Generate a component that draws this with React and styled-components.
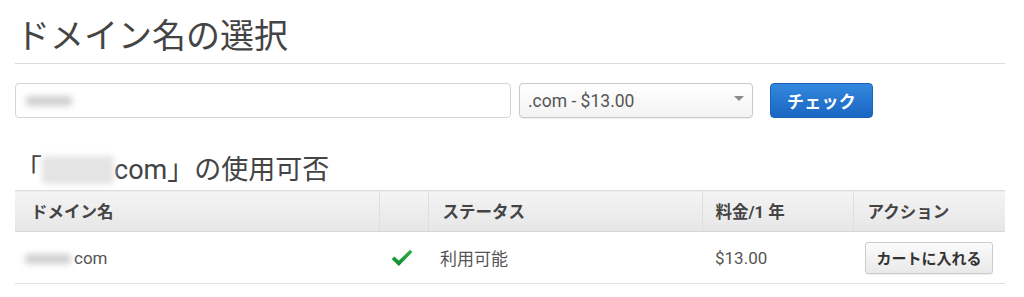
import React from "react";
import styled, { createGlobalStyle } from "styled-components";

const Global = createGlobalStyle`
  html, body {
    margin: 0;
    padding: 0;
    background: #fff;
  }
  body {
    font-family: Roboto, "Noto Sans CJK JP", "DejaVu Sans", sans-serif;
    color: #444;
  }
`;

const Page = styled.div`
  width: 990px;
  padding-left: 15px;
`;

const Title = styled.h1`
  margin: 0;
  padding: 14px 0 5px 1px;
  font-size: 34px;
  line-height: 44px;
  font-weight: 400;
  color: #444;
  border-bottom: 1px solid #dcdcdc;
`;

const Form = styled.div`
  display: flex;
  align-items: center;
  margin-top: 19px;
`;

const TextField = styled.div`
  box-sizing: border-box;
  width: 496px;
  height: 35px;
  border: 1px solid #d4d4d4;
  border-radius: 4px;
  background: #fff;
  display: flex;
  align-items: center;
  padding-left: 10px;
`;

const Blur = styled.span`
  display: inline-block;
  width: ${(p) => p.w}px;
  height: ${(p) => p.h}px;
  margin-right: ${(p) => p.mr || 0}px;
  background: ${(p) => p.c || "#cfcfcf"};
  filter: blur(3px);
  border-radius: 4px;
  vertical-align: middle;
`;

const Select = styled.div`
  box-sizing: border-box;
  width: 234px;
  height: 35px;
  margin-left: 8px;
  border: 1px solid #c8c8c8;
  border-radius: 4px;
  background: linear-gradient(#ffffff, #f3f3f3);
  box-shadow: 0 1px 1px rgba(0, 0, 0, 0.06);
  display: flex;
  align-items: center;
  justify-content: space-between;
  padding: 0 8px 0 8px;
  font-size: 17.5px;
  color: #555;
`;

const Caret = styled.span`
  width: 0;
  height: 0;
  border-left: 5px solid transparent;
  border-right: 5px solid transparent;
  border-top: 5px solid #8a8a8a;
  margin-bottom: 4px;
`;

const PrimaryButton = styled.button`
  box-sizing: border-box;
  width: 103px;
  height: 35px;
  margin-left: 17px;
  border: 1px solid #1b63b8;
  border-radius: 4px;
  background: linear-gradient(#3388dd, #1a66c2);
  color: #fff;
  font-family: inherit;
  font-size: 17px;
  font-weight: 700;
  letter-spacing: 0.3px;
  padding: 0;
`;

const SubTitle = styled.h2`
  margin: 35px 0 3px 0;
  font-size: 27px;
  line-height: 34px;
  font-weight: 400;
  color: #444;
  display: flex;
  align-items: center;
`;

const Table = styled.table`
  width: 990px;
  border-collapse: collapse;
  table-layout: fixed;
  font-size: 17px;
`;

const Th = styled.th`
  height: 40px;
  padding: 0 0 0 ${(p) => p.pl ?? 14}px;
  text-align: left;
  font-weight: 700;
  font-size: 16.5px;
  color: #444;
  background: linear-gradient(#f4f4f4, #e6e6e6);
  border-top: 1px solid #dcdcdc;
  border-bottom: 1px solid #d6d6d6;
  border-left: ${(p) => (p.first ? "none" : "1px solid #dedede")};
`;

const Td = styled.td`
  height: 51px;
  padding: 0 0 0 ${(p) => p.pl ?? 14}px;
  border-bottom: 1px solid #e0e0e0;
  color: #555;
  vertical-align: middle;
`;

const CartButton = styled.button`
  box-sizing: border-box;
  width: 128px;
  height: 32px;
  border: 1px solid #cdcdcd;
  border-radius: 3px;
  background: linear-gradient(#fbfbfb, #e9e9e9);
  box-shadow: 0 1px 1px rgba(0, 0, 0, 0.08);
  font-family: inherit;
  font-size: 15px;
  font-weight: 700;
  color: #333;
  padding: 0;
`;

function Check() {
  return (
    <svg width="22" height="18" viewBox="0 0 23 19" style={{ display: "block", marginLeft: 12 }}>
      <defs>
        <linearGradient id="g" x1="0" y1="0" x2="0" y2="1">
          <stop offset="0" stopColor="#33b24d" />
          <stop offset="1" stopColor="#108a2c" />
        </linearGradient>
      </defs>
      <path d="M0.5 10.5 L3.5 7.8 L8.2 12.2 L20 0.8 L22.5 3.2 L8.2 18 Z" fill="url(#g)" />
    </svg>
  );
}

export default function App() {
  return (
    <Page>
      <Global />
      <Title>ドメイン名の選択</Title>
      <Form>
        <TextField>
          <Blur w={46} h={10} />
        </TextField>
        <Select>
          <span>.com - $13.00</span>
          <Caret />
        </Select>
        <PrimaryButton>チェック</PrimaryButton>
      </Form>
      <SubTitle>
        「<Blur w={72} h={28} c="#e4e4e4" />com」の使用可否
      </SubTitle>
      <Table>
        <colgroup>
          <col style={{ width: 364 }} />
          <col style={{ width: 49 }} />
          <col style={{ width: 274 }} />
          <col style={{ width: 151 }} />
          <col style={{ width: 152 }} />
        </colgroup>
        <thead>
          <tr>
            <Th first pl={16}>ドメイン名</Th>
            <Th />
            <Th>ステータス</Th>
            <Th pl={13}>料金/1 年</Th>
            <Th>アクション</Th>
          </tr>
        </thead>
        <tbody>
          <tr>
            <Td pl={10}>
              <Blur w={46} h={10} mr={3} />
              com
            </Td>
            <Td pl={0}>
              <Check />
            </Td>
            <Td pl={12}>利用可能</Td>
            <Td pl={13}>$13.00</Td>
            <Td pl={12}>
              <CartButton>カートに入れる</CartButton>
            </Td>
          </tr>
        </tbody>
      </Table>
    </Page>
  );
}
